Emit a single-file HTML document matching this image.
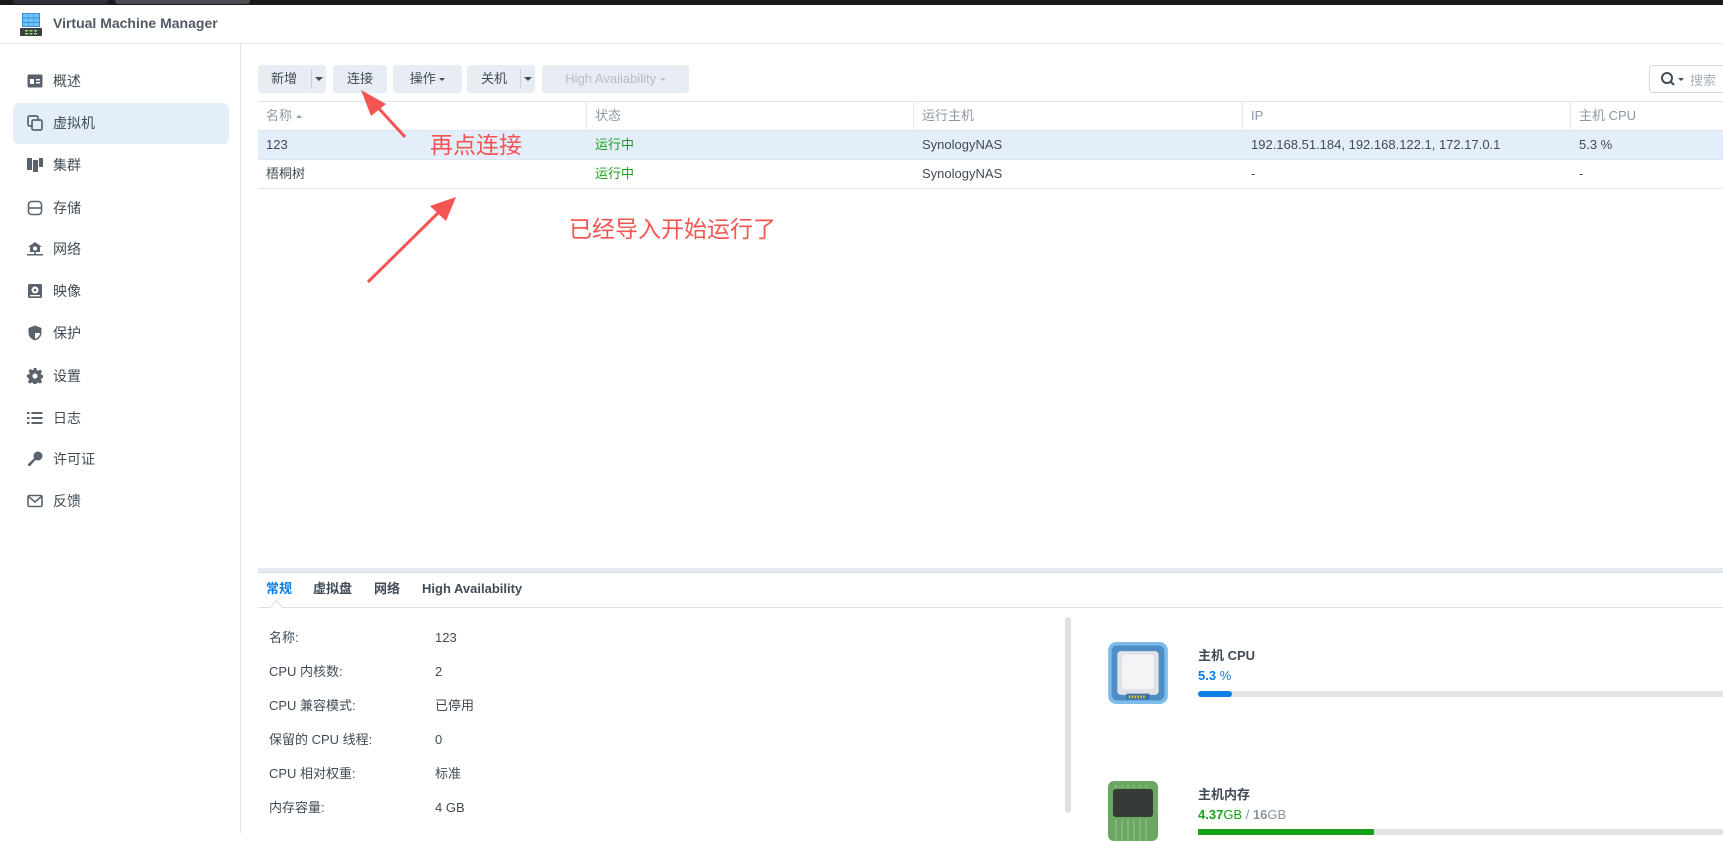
<!DOCTYPE html>
<html><head><meta charset="utf-8">
<style>
*{margin:0;padding:0;box-sizing:border-box}
body{width:1723px;height:833px;overflow:hidden;background:#fff;font-family:"Liberation Sans","Noto Sans CJK SC",sans-serif;font-size:13px;color:#414b55;position:relative}
.a{position:absolute}
.topbar{left:0;top:0;width:1723px;height:5px;background:#1a1a1a}
.hdr{left:0;top:5px;width:1723px;height:39px;border-bottom:1px solid #dfe4ea}
.side{left:0;top:44px;width:241px;height:789px;border-right:1px solid #dfe4ea}
.si{position:absolute;left:0;width:240px;height:20px;line-height:20px;font-size:14px;color:#414b55}
.si span{position:absolute;left:53px}
.si svg{position:absolute;left:27px;top:2px}
.btn{position:absolute;top:65px;height:28px;background:#e8edf3;border-radius:3px;line-height:28px;font-size:13px;color:#414b55;text-align:center}
.th{position:absolute;top:101px;height:29px;line-height:29px;color:#8d98a5;font-size:13px}
.td{position:absolute;font-size:13px;line-height:29px}
.vl{position:absolute;top:101px;width:1px;height:29px;background:#e4e9ee}
.hl{position:absolute;left:258px;width:1465px;height:1px;background:#dfe4ea}
.red{color:#f45553;font-size:23px;position:absolute;font-family:"Noto Sans CJK SC",sans-serif}
.lab{position:absolute;left:269px;font-size:13px;line-height:20px;height:20px}
.val{position:absolute;left:435px;font-size:13px;line-height:20px;height:20px}
.tab{position:absolute;top:580px;font-size:13px;font-weight:bold;line-height:18px;height:18px}
</style></head><body>
<div class="a topbar"></div>
<div class="a" style="left:13px;top:0;width:95px;height:4px;background:#2d3034;border-radius:0 0 3px 3px"></div>
<div class="a" style="left:115px;top:0;width:135px;height:4px;background:#4a4d52;border-radius:0 0 3px 3px"></div>
<div class="a hdr"></div>
<svg class="a" style="left:19px;top:12px" width="24" height="25" viewBox="0 0 24 25">
<rect x="3" y="1" width="18" height="14" fill="#3a8ee0"/>
<g fill="#6cc4f5"><rect x="4" y="2" width="5" height="3.5"/><rect x="9.5" y="2" width="5" height="3.5"/><rect x="15" y="2" width="5" height="3.5"/><rect x="4" y="6.5" width="5" height="3.5"/><rect x="9.5" y="6.5" width="5" height="3.5"/><rect x="15" y="6.5" width="5" height="3.5"/><rect x="4" y="11" width="5" height="3"/><rect x="9.5" y="11" width="5" height="3"/><rect x="15" y="11" width="5" height="3"/></g>
<rect x="1" y="16" width="22" height="8" rx="1" fill="#3b3f45"/>
<g fill="#9ee06a"><rect x="6" y="18" width="3" height="1.5"/><rect x="10.5" y="18" width="3" height="1.5"/><rect x="15" y="18" width="3" height="1.5"/><rect x="6" y="21" width="3" height="1.5"/><rect x="10.5" y="21" width="3" height="1.5"/><rect x="15" y="21" width="3" height="1.5"/></g>
</svg>
<div class="a" style="left:53px;top:15px;font-size:14px;font-weight:bold;color:#505a64">Virtual Machine Manager</div>

<div class="a side"></div>
<div class="a" style="left:13px;top:103px;width:216px;height:41px;background:#e4eef9;border-radius:6px"></div>
<div class="si" style="top:71px"><svg width="16" height="16" viewBox="0 0 16 16"><rect x="0.5" y="1.5" width="15" height="13" rx="1.5" fill="#5a636d"/><rect x="3" y="6" width="4" height="5" fill="#fff"/><rect x="9" y="6" width="4" height="1.5" fill="#fff"/><rect x="9" y="9" width="4" height="1.5" fill="#fff"/></svg><span>概述</span></div>
<div class="si" style="top:113px"><svg width="16" height="16" viewBox="0 0 16 16" fill="none" stroke="#5a636d" stroke-width="1.7"><rect x="1" y="1" width="10" height="10" rx="1.5"/><rect x="5" y="5" width="10" height="10" rx="1.5" fill="#e4eef9"/></svg><span>虚拟机</span></div>
<div class="si" style="top:155px"><svg width="16" height="16" viewBox="0 0 16 16" fill="#5a636d"><rect x="0" y="1" width="5" height="12"/><rect x="6" y="3" width="5" height="12"/><rect x="12" y="1" width="4" height="9"/></svg><span>集群</span></div>
<div class="si" style="top:198px"><svg width="16" height="16" viewBox="0 0 16 16" fill="none" stroke="#5a636d" stroke-width="1.6"><rect x="1.5" y="1.5" width="13" height="13" rx="3"/><line x1="1.5" y1="8" x2="14.5" y2="8"/></svg><span>存储</span></div>
<div class="si" style="top:239px"><svg width="16" height="16" viewBox="0 0 16 16" fill="#5a636d"><path d="M8 1L1 6h2v5h10V6h2z"/><circle cx="8" cy="7.5" r="2" fill="#fff"/><rect x="0" y="13" width="16" height="1.5"/><rect x="7.2" y="11" width="1.6" height="3"/></svg><span>网络</span></div>
<div class="si" style="top:281px"><svg width="16" height="16" viewBox="0 0 16 16"><rect x="1" y="1" width="14" height="14" rx="1.5" fill="#5a636d"/><circle cx="8" cy="7" r="3.5" fill="#fff"/><circle cx="8" cy="7" r="1.3" fill="#5a636d"/><rect x="3" y="12" width="10" height="1.3" fill="#fff"/></svg><span>映像</span></div>
<div class="si" style="top:323px"><svg width="16" height="16" viewBox="0 0 16 16"><path d="M8 0.5L1.5 3v5c0 3.5 3 6.5 6.5 7.5 3.5-1 6.5-4 6.5-7.5V3z" fill="#5a636d"/><path d="M8 2.5v5.5h5c0 2.5-2 5-5 5.8z" fill="#fff"/></svg><span>保护</span></div>
<div class="si" style="top:366px"><svg width="16" height="16" viewBox="0 0 16 16"><path fill="#5a636d" d="M6.6 0h2.8l.4 2.2 1.4.6 1.9-1.3 2 2-1.3 1.9.6 1.4 2.2.4v2.8l-2.2.4-.6 1.4 1.3 1.9-2 2-1.9-1.3-1.4.6-.4 2.2H6.6l-.4-2.2-1.4-.6-1.9 1.3-2-2 1.3-1.9-.6-1.4L0 9.4V6.6l2.2-.4.6-1.4L1.5 2.9l2-2 1.9 1.3 1.4-.6z"/><circle cx="8" cy="8" r="2.6" fill="#fff"/></svg><span>设置</span></div>
<div class="si" style="top:408px"><svg width="16" height="16" viewBox="0 0 16 16" fill="#5a636d"><rect x="0" y="2" width="2.5" height="2"/><rect x="4.5" y="2" width="11" height="2"/><rect x="0" y="7" width="2.5" height="2"/><rect x="4.5" y="7" width="11" height="2"/><rect x="0" y="12" width="2.5" height="2"/><rect x="4.5" y="12" width="11" height="2"/></svg><span>日志</span></div>
<div class="si" style="top:449px"><svg width="16" height="16" viewBox="0 0 16 16" fill="#5a636d"><circle cx="11" cy="5" r="4.5"/><path d="M7.5 7l1.5 1.5-6 6.5H1v-2z"/></svg><span>许可证</span></div>
<div class="si" style="top:491px"><svg width="16" height="16" viewBox="0 0 16 16" fill="none" stroke="#5a636d" stroke-width="1.6"><rect x="1" y="2.5" width="14" height="11" rx="1.5"/><path d="M1.5 3.5L8 9l6.5-5.5"/></svg><span>反馈</span></div>

<div class="btn" style="left:258px;width:68px"><span style="position:absolute;left:13px">新增</span><div style="position:absolute;left:53px;top:4px;width:1px;height:20px;background:#c9d0d8"></div><span style="position:absolute;left:57px;top:12px;border:4px solid transparent;border-top-color:#414b55;border-bottom:0"></span></div>
<div class="btn" style="left:333px;width:54px">连接</div>
<div class="btn" style="left:393px;width:69px">操作 <span style="display:inline-block;border:3.5px solid transparent;border-top-color:#414b55;border-bottom:0;vertical-align:middle"></span></div>
<div class="btn" style="left:467px;width:68px"><span style="position:absolute;left:14px">关机</span><div style="position:absolute;left:53px;top:4px;width:1px;height:20px;background:#c9d0d8"></div><span style="position:absolute;left:57px;top:12px;border:4px solid transparent;border-top-color:#414b55;border-bottom:0"></span></div>
<div class="btn" style="left:542px;width:147px;color:#b5bdc6">High Availability <span style="display:inline-block;border:3.5px solid transparent;border-top-color:#b5bdc6;border-bottom:0;vertical-align:middle"></span></div>
<div class="a" style="left:1649px;top:65px;width:90px;height:28px;border:1px solid #d3d9e0;border-radius:4px"></div>
<svg class="a" style="left:1660px;top:71px" width="16" height="16" viewBox="0 0 16 16" fill="none" stroke="#414b55" stroke-width="2"><circle cx="7" cy="7" r="5"/><line x1="10.5" y1="10.5" x2="14" y2="14"/></svg>
<div class="a" style="left:1678px;top:78px;border:3.5px solid transparent;border-top-color:#414b55;border-bottom:0"></div>
<div class="a" style="left:1690px;top:70px;color:#a7b0ba;font-size:13px">搜索</div>

<div class="hl" style="top:101px;background:#dde3ea"></div>
<div class="a" style="left:258px;top:130px;width:1465px;height:29px;background:#e4eefa"></div>
<div class="hl" style="top:130px"></div>
<div class="hl" style="top:159px"></div>
<div class="hl" style="top:188px"></div>
<div class="vl" style="left:586px"></div><div class="vl" style="left:913px"></div><div class="vl" style="left:1242px"></div><div class="vl" style="left:1570px"></div>
<div class="th" style="left:266px">名称 <span style="display:inline-block;border:3px solid transparent;border-bottom-color:#8d98a5;border-top:0;vertical-align:middle"></span></div>
<div class="th" style="left:595px">状态</div>
<div class="th" style="left:922px">运行主机</div>
<div class="th" style="left:1251px">IP</div>
<div class="th" style="left:1579px">主机 CPU</div>
<div class="td" style="left:266px;top:130px">123</div>
<div class="td" style="left:595px;top:130px;color:#1aa01a">运行中</div>
<div class="td" style="left:922px;top:130px">SynologyNAS</div>
<div class="td" style="left:1251px;top:130px">192.168.51.184, 192.168.122.1, 172.17.0.1</div>
<div class="td" style="left:1579px;top:130px">5.3 %</div>
<div class="td" style="left:266px;top:159px">梧桐树</div>
<div class="td" style="left:595px;top:159px;color:#1aa01a">运行中</div>
<div class="td" style="left:922px;top:159px">SynologyNAS</div>
<div class="td" style="left:1251px;top:159px">-</div>
<div class="td" style="left:1579px;top:159px">-</div>

<svg class="a" style="left:0;top:0" width="1723" height="833">
<g fill="#f45553" stroke="#f45553">
<line x1="405" y1="137" x2="372" y2="101" stroke-width="3"/>
<polygon points="361,90 386,104 371,116" stroke="none"/>
<line x1="368" y1="282" x2="440" y2="211" stroke-width="3"/>
<polygon points="456,197 446,221 430,206" stroke="none"/>
</g></svg>
<div class="red" style="left:430px;top:126px">再点连接</div>
<div class="red" style="left:569px;top:210px">已经导入开始运行了</div>

<div class="a" style="left:258px;top:568px;width:1465px;height:4px;background:#e8ecf0"></div>
<div class="a" style="left:258px;top:572px;width:1465px;height:1px;background:#d8dee5"></div>
<div class="tab" style="left:266px;color:#0a7fe6">常规</div>
<div class="tab" style="left:313px">虚拟盘</div>
<div class="tab" style="left:374px">网络</div>
<div class="tab" style="left:422px">High Availability</div>
<div class="a" style="left:258px;top:607px;width:1465px;height:1px;background:#dae0e7"></div>
<div class="a" style="left:272px;top:602px;width:9px;height:9px;background:#fff;border-left:1px solid #dae0e7;border-top:1px solid #dae0e7;transform:rotate(45deg)"></div>

<div class="lab" style="top:628px">名称:</div><div class="val" style="top:628px">123</div>
<div class="lab" style="top:662px">CPU 内核数:</div><div class="val" style="top:662px">2</div>
<div class="lab" style="top:696px">CPU 兼容模式:</div><div class="val" style="top:696px">已停用</div>
<div class="lab" style="top:730px">保留的 CPU 线程:</div><div class="val" style="top:730px">0</div>
<div class="lab" style="top:764px">CPU 相对权重:</div><div class="val" style="top:764px">标准</div>
<div class="lab" style="top:798px">内存容量:</div><div class="val" style="top:798px">4 GB</div>

<div class="a" style="left:1065px;top:617px;width:6px;height:196px;background:#e0e0e0;border-radius:3px"></div>

<svg class="a" style="left:1108px;top:642px" width="60" height="62" viewBox="0 0 52 54">
<rect x="0" y="0" width="52" height="54" rx="7" fill="#7ebde9"/>
<rect x="3" y="3" width="46" height="48" rx="5" fill="#4f8dc6"/>
<rect x="8" y="8" width="36" height="38" rx="3" fill="#dfe2e6"/>
<rect x="12" y="11" width="28" height="30" rx="3" fill="#f3f4f6"/>
<rect x="16" y="45" width="20" height="5" fill="#3a6ea3"/>
<g fill="#f5d000"><rect x="18" y="46.5" width="1.3" height="2.5"/><rect x="20.5" y="46.5" width="1.3" height="2.5"/><rect x="23" y="46.5" width="1.3" height="2.5"/><rect x="25.5" y="46.5" width="1.3" height="2.5"/><rect x="28" y="46.5" width="1.3" height="2.5"/><rect x="30.5" y="46.5" width="1.3" height="2.5"/></g>
</svg>
<div class="a" style="left:1198px;top:645px;font-size:13px;font-weight:bold">主机 CPU</div>
<div class="a" style="left:1198px;top:668px;font-size:13px;font-weight:bold;color:#0a7fe6">5.3 <span style="font-weight:normal">%</span></div>
<div class="a" style="left:1198px;top:691px;width:525px;height:6px;background:#e3e3e3;border-radius:3px 0 0 3px"></div>
<div class="a" style="left:1198px;top:691px;width:34px;height:6px;background:#0a7fe6;border-radius:3px"></div>

<svg class="a" style="left:1108px;top:781px" width="50" height="60" viewBox="0 0 50 60">
<rect x="0" y="0" width="50" height="60" rx="6" fill="#6aa862"/>
<rect x="5" y="8" width="40" height="28" rx="3" fill="#363b37"/>
<g stroke="#a9cfa2" stroke-width="0.8"><line x1="8" y1="4" x2="8" y2="7"/><line x1="14" y1="4" x2="14" y2="7"/><line x1="20" y1="4" x2="20" y2="7"/><line x1="26" y1="4" x2="26" y2="7"/><line x1="32" y1="4" x2="32" y2="7"/><line x1="38" y1="4" x2="38" y2="7"/><line x1="8" y1="38" x2="8" y2="60"/><line x1="14" y1="38" x2="14" y2="60"/><line x1="20" y1="38" x2="20" y2="60"/><line x1="26" y1="38" x2="26" y2="60"/><line x1="32" y1="38" x2="32" y2="60"/><line x1="38" y1="38" x2="38" y2="60"/></g>
</svg>
<div class="a" style="left:1198px;top:784px;font-size:13px;font-weight:bold">主机内存</div>
<div class="a" style="left:1198px;top:807px;font-size:13px;color:#8a949e"><b style="color:#1aa01a">4.37</b><span style="color:#1aa01a">GB</span> / <b>16</b>GB</div>
<div class="a" style="left:1198px;top:829px;width:525px;height:6px;background:#e3e3e3"></div>
<div class="a" style="left:1198px;top:829px;width:176px;height:6px;background:#1aa01a"></div>
</body></html>
